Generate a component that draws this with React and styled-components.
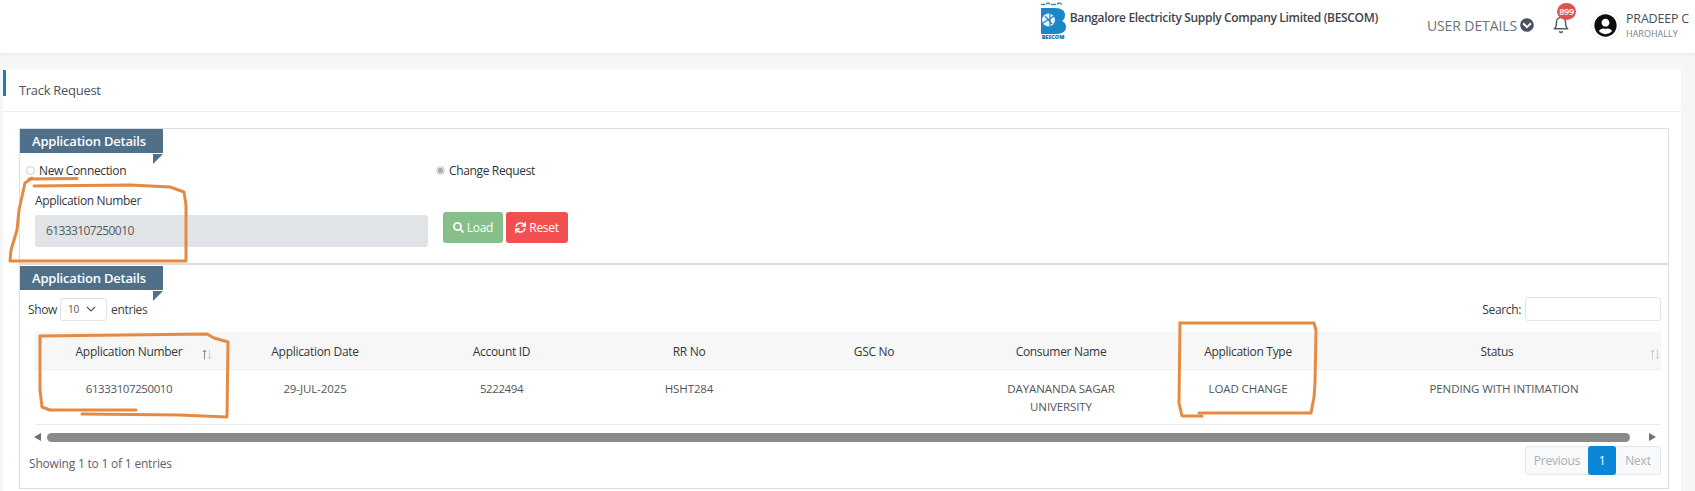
import styled, { createGlobalStyle } from "styled-components"
import { FaSearch, FaSync, FaChevronCircleDown, FaUserCircle } from "react-icons/fa"
import { FiBell } from "react-icons/fi"

const GlobalStyle = createGlobalStyle`
  html, body {
    margin: 0;
    background: #f5f6f8;
    font-family: "Open Sans", "Noto Sans", sans-serif;
    color: #3d4247;
  }
  * { box-sizing: border-box; }
`

const Page = styled.div`
  position: relative;
  width: 1695px;
  height: 491px;
  overflow: hidden;
`

const Header = styled.header`
  height: 53px;
  background: #fff;
  box-shadow: 0 1px 3px rgba(0, 0, 0, 0.08);
  display: flex;
  justify-content: flex-end;
  padding-right: 6px;
`

const Brand = styled.div`
  display: flex;
  align-items: flex-start;
  padding-top: 2px;
  margin-right: 49px;
`

const BrandName = styled.div`
  margin: 7px 0 0 3px;
  font-size: 12px;
  font-weight: 600;
  letter-spacing: -0.33px;
  line-height: 17px;
  color: #3f444a;
`

const UserDetails = styled.div`
  display: flex;
  align-items: center;
  gap: 3px;
  height: 50px;
  font-size: 14px;
  letter-spacing: -0.1px;
  color: #6c7277;
  svg { color: #4a5260; font-size: 14px; }
`

const BellWrap = styled.div`
  position: relative;
  width: 22px;
  height: 50px;
  margin: 0 17px 0 18px;
  padding-top: 15px;
  color: #555c66;
  font-size: 18px;
`

const Badge = styled.span`
  position: absolute;
  left: 5px;
  top: 3px;
  width: 19px;
  height: 17px;
  border-radius: 50%;
  background: #e2504f;
  color: #fff;
  font-size: 9px;
  font-weight: 600;
  letter-spacing: -0.3px;
  line-height: 17px;
  text-align: center;
`

const Avatar = styled.div`
  width: 29px;
  height: 29px;
  margin-top: 11px;
  border-radius: 50%;
  border: 1px solid #eee;
  display: flex;
  align-items: center;
  justify-content: center;
  font-size: 23px;
  color: #0c0c0c;
`

const UserInfo = styled.div`
  margin: 10px 0 0 6px;
`

const UserName = styled.div`
  font-size: 12.5px;
  font-weight: 500;
  line-height: 17px;
  letter-spacing: -0.2px;
  color: #4a4f55;
`

const UserPlace = styled.div`
  font-size: 9px;
  line-height: 13px;
  color: #7b8188;
`

const Card = styled.main`
  position: relative;
  margin: 16px 14px 0 3px;
  height: 422px;
  background: #fff;
  padding: 0 12px 0 16px;
  &::before {
    content: "";
    position: absolute;
    left: 0;
    top: 1px;
    width: 3px;
    height: 26px;
    background: #1f7fb0;
  }
`

const CardTitle = styled.div`
  height: 43px;
  margin: 0 -12px 16px -16px;
  padding: 11px 0 0 16px;
  border-bottom: 1px solid #eeeff1;
  font-size: 13px;
  font-weight: 500;
  letter-spacing: -0.3px;
  line-height: 20px;
  color: #4d5358;
`

const Box = styled.div`
  border: 1px solid #dcdfe2;
  height: 361px;
`

const Section = styled.section`
  height: ${(p) => p.$height}px;
  border-bottom: ${(p) => (p.$ruled ? "2px solid #dcdddf" : "none")};
  margin-bottom: ${(p) => (p.$ruled ? "1px" : "0")};
`

const Tab = styled.div`
  position: relative;
  width: 143px;
  height: 24px;
  background: #50708a;
  color: #fff;
  font-size: 13px;
  font-weight: 600;
  letter-spacing: -0.2px;
  line-height: 24px;
  padding-left: 12px;
  &::after {
    content: "";
    position: absolute;
    right: 0;
    top: 100%;
    margin-top: 1px;
    border-top: 10px solid #50708a;
    border-right: 10px solid transparent;
    width: 0;
  }
`

const RadioRow = styled.div`
  display: grid;
  grid-template-columns: 410px 1fr;
  padding: 5px 0 0 6px;
  height: 30px;
`

const RadioLabel = styled.label`
  display: flex;
  align-items: center;
  gap: 4px;
  font-size: 12px;
  font-weight: 500;
  letter-spacing: -0.35px;
  line-height: 18px;
  color: #2f3439;
`

const Radio = styled.span`
  width: 9px;
  height: 9px;
  border-radius: 50%;
  border: 1px solid #c9ccd0;
  background: ${(p) => (p.$checked ? "radial-gradient(circle, #a9adb1 0 2.5px, #eceeef 3px)" : "#fff")};
`

const FormRow = styled.div`
  display: flex;
  align-items: flex-start;
  padding: 9px 0 0 15px;
`

const Field = styled.div`
  width: 393px;
  margin-right: 15px;
`

const FieldLabel = styled.div`
  font-size: 12px;
  font-weight: 500;
  letter-spacing: -0.35px;
  line-height: 18px;
  color: #33383d;
  margin-bottom: 5px;
`

const TextBox = styled.div`
  height: 32px;
  padding-left: 11px;
  border-radius: 3px;
  background: #e1e4e6;
  font-size: 12px;
  letter-spacing: -0.6px;
  line-height: 32px;
  color: #555b61;
`

const Actions = styled.div`
  display: flex;
  gap: 3px;
  margin-top: 20px;
`

const Button = styled.button`
  height: 31px;
  width: ${(p) => p.$width}px;
  border: 0;
  border-radius: 3px;
  background: ${(p) => p.$bg};
  color: #fff;
  font: 12px "Open Sans", sans-serif;
  letter-spacing: -0.3px;
  display: flex;
  align-items: center;
  justify-content: center;
  gap: 3px;
  padding: 0;
  svg { font-size: 11px; }
`

const Toolbar = styled.div`
  display: flex;
  justify-content: space-between;
  align-items: center;
  height: 24px;
  margin: 7px 7px 11px 8px;
  font-size: 12px;
  letter-spacing: -0.35px;
`

const Show = styled.div`
  display: flex;
  align-items: center;
  gap: 4px;
  color: #3a3f44;
`

const Select = styled.div`
  width: 47px;
  height: 23px;
  margin-left: -1px;
  border: 1px solid #e0e3e6;
  border-radius: 3px;
  display: flex;
  align-items: center;
  gap: 7px;
  padding-left: 7px;
  font-size: 10px;
  color: #555;
`

const SearchWrap = styled.div`
  display: flex;
  align-items: center;
  gap: 4px;
  font-weight: 500;
  color: #33383d;
`

const SearchBox = styled.div`
  width: 136px;
  height: 24px;
  border: 1px solid #e0e3e6;
  border-radius: 3px;
`

const TableWrap = styled.div`
  margin: 0 7px 0 15px;
`

const Table = styled.table`
  width: 1626px;
  table-layout: fixed;
  border-collapse: collapse;
  font-size: 11.5px;
  letter-spacing: -0.1px;
  tbody tr { border-bottom: 1px solid #e9ebed; }
`

const Th = styled.th`
  position: relative;
  height: 37px;
  padding: 2px ${(p) => (p.$last ? 7 : 0)}px 0 0;
  background: #f7f7f7;
  border-bottom: 1px solid #eceeef;
  font-weight: 500;
  font-size: 12px;
  letter-spacing: -0.3px;
  color: #33383d;
  text-align: center;
`

const SortIcon = styled.svg`
  position: absolute;
  right: ${(p) => p.$right}px;
  top: 17px;
  fill: none;
  stroke-width: 1;
`

const Td = styled.td`
  height: 55px;
  padding: 10px ${(p) => (p.$wrap ? 30 : 0)}px 0 ${(p) => (p.$last ? 7 : p.$wrap ? 30 : 0)}px;
  color: #50565c;
  line-height: 18px;
  text-align: center;
  vertical-align: top;
  letter-spacing: ${(p) => (p.$digits ? "-0.4px" : "-0.1px")};
`

const Scroller = styled.div`
  display: flex;
  align-items: center;
  height: 9px;
  margin: 8px 0 0 -1px;
`

const Arrow = styled.span`
  width: 0;
  height: 0;
  border-top: 4px solid transparent;
  border-bottom: 4px solid transparent;
  ${(p) => (p.$right ? "border-left: 7px solid #707070; margin-left: 19px;" : "border-right: 7px solid #707070; margin-right: 6px;")}
`

const Thumb = styled.div`
  width: 1583px;
  height: 9px;
  border-radius: 5px;
  background: #8a8a8a;
`

const Footer = styled.div`
  display: flex;
  justify-content: space-between;
  height: 29px;
  margin-top: 4px;
  font-size: 12px;
  letter-spacing: -0.2px;
  color: #5b6167;
`

const Showing = styled.div`
  margin: 9px 0 0 -6px;
  line-height: 18px;
`

const Pager = styled.div`
  display: flex;
  height: 29px;
  border: 1px solid #e3e6e8;
  border-radius: 3px;
  background: #f8f9fa;
  color: #a9afb5;
`

const PageLink = styled.span`
  width: ${(p) => p.$width}px;
  margin: ${(p) => (p.$active ? "-1px 0" : "0")};
  border-radius: ${(p) => (p.$active ? "3px" : "0")};
  background: ${(p) => (p.$active ? "#0a87d8" : "transparent")};
  color: ${(p) => (p.$active ? "#fff" : "inherit")};
  line-height: ${(p) => (p.$active ? 29 : 27)}px;
  text-align: center;
`

const Marks = styled.svg`
  position: absolute;
  inset: 0;
  pointer-events: none;
  fill: none;
  stroke: #e58a42;
  stroke-width: 3;
  stroke-linecap: round;
  stroke-linejoin: round;
`

const Logo = () => (
  <svg width="27" height="38" viewBox="0 0 27 38">
    <path d="M1 2.500h4M6 2.500c1-2 3-2 4 0M11 2.500h5M17 2.500c1-2 3-2 5 0" stroke="#3a8f9a" strokeWidth="1.4" fill="none" />
    <path d="M1 6h14c7 0 10 3 10 7 0 3-1 5-3 6 2.500 1 4 3 4 6 0 4-3 7-10 7H1z" fill="#1b87c9" />
    <circle cx="8.500" cy="18" r="6.500" fill="#eaf5fa" />
    <path d="M3 21l11-7M10 11v17M5 14l7 8" stroke="#1b87c9" strokeWidth="1.200" fill="none" />
    <text x="13" y="37" fontSize="5.400" fontWeight="800" fontFamily="Open Sans" fill="#1769a5" textAnchor="middle">BESCOM</text>
  </svg>
)

const SortArrows = ({ right, up }) => (
  <SortIcon $right={right} width="10" height="11" viewBox="0 0 10 11">
    <path d="M2.500 10.500V1M0.800 3L2.500 1L4.200 3" stroke={up} />
    <path d="M7.500 0.500V10M5.800 8L7.500 10L9.200 8" stroke="#c9cccf" />
  </SortIcon>
)

const columns = [
  { title: "Application Number", value: "61333107250010", width: 188, digits: true },
  { title: "Application Date", value: "29-JUL-2025", width: 184 },
  { title: "Account ID", value: "5222494", width: 189, digits: true },
  { title: "RR No", value: "HSHT284", width: 186 },
  { title: "GSC No", value: "", width: 184 },
  { title: "Consumer Name", value: "DAYANANDA SAGAR UNIVERSITY", width: 190, wrap: true },
  { title: "Application Type", value: "LOAD CHANGE", width: 184 },
  { title: "Status", value: "PENDING WITH INTIMATION", width: 321, last: true },
]

export default function App() {
  return (
    <Page>
      <GlobalStyle />
      <Header>
        <Brand>
          <Logo />
          <BrandName>Bangalore Electricity Supply Company Limited (BESCOM)</BrandName>
        </Brand>
        <UserDetails>
          USER DETAILS <FaChevronCircleDown />
        </UserDetails>
        <BellWrap>
          <FiBell />
          <Badge>899</Badge>
        </BellWrap>
        <Avatar>
          <FaUserCircle />
        </Avatar>
        <UserInfo>
          <UserName>PRADEEP C</UserName>
          <UserPlace>HAROHALLY</UserPlace>
        </UserInfo>
      </Header>

      <Card>
        <CardTitle>Track Request</CardTitle>
        <Box>
          <Section $height={136} $ruled>
            <Tab>Application Details</Tab>
            <RadioRow>
              <RadioLabel>
                <Radio /> New Connection
              </RadioLabel>
              <RadioLabel>
                <Radio $checked /> Change Request
              </RadioLabel>
            </RadioRow>
            <FormRow>
              <Field>
                <FieldLabel>Application Number</FieldLabel>
                <TextBox>61333107250010</TextBox>
              </Field>
              <Actions>
                <Button $bg="#86bf8a" $width={60}>
                  <FaSearch /> Load
                </Button>
                <Button $bg="#f25050" $width={62}>
                  <FaSync /> Reset
                </Button>
              </Actions>
            </FormRow>
          </Section>

          <Section $height={222}>
            <Tab>Application Details</Tab>
            <Toolbar>
              <Show>
                Show
                <Select>
                  10
                  <svg width="10" height="6" viewBox="0 0 10 6" fill="none" stroke="#555" strokeWidth="1.2">
                    <path d="M1 1l4 4 4-4" />
                  </svg>
                </Select>
                entries
              </Show>
              <SearchWrap>
                Search:
                <SearchBox />
              </SearchWrap>
            </Toolbar>
            <TableWrap>
              <Table>
                <colgroup>
                  {columns.map((c) => (
                    <col key={c.title} width={c.width} />
                  ))}
                </colgroup>
                <thead>
                  <tr>
                    {columns.map((c, i) => (
                      <Th key={c.title} $last={c.last}>
                        {c.title}
                        {i === 0 && <SortArrows right={11} up="#8a8d90" />}
                        {c.last && <SortArrows right={1} up="#c9cccf" />}
                      </Th>
                    ))}
                  </tr>
                </thead>
                <tbody>
                  <tr>
                    {columns.map((c) => (
                      <Td key={c.title} $last={c.last} $wrap={c.wrap} $digits={c.digits}>
                        {c.value}
                      </Td>
                    ))}
                  </tr>
                </tbody>
              </Table>
              <Scroller>
                <Arrow />
                <Thumb />
                <Arrow $right />
              </Scroller>
              <Footer>
                <Showing>Showing 1 to 1 of 1 entries</Showing>
                <Pager>
                  <PageLink $width={62}>Previous</PageLink>
                  <PageLink $active $width={28}>1</PageLink>
                  <PageLink $width={44}>Next</PageLink>
                </Pager>
              </Footer>
            </TableWrap>
          </Section>
        </Box>
      </Card>

      <Marks width="1695" height="491" viewBox="0 0 1695 491">
        <path d="M29 179L77 178.500" />
        <path d="M34 186L130 185L170 187L184 192L186 205L186 261L10 261L11 250L17 230L19 210L25 183L32 178" />
        <path d="M40 336L207 334L214 338L228 342L227 417L180 415L82 414" />
        <path d="M136 410L50 410L42 407L40 390L40 336" />
        <path d="M1180 323L1314 323L1316 330L1315 383L1314 397L1311 413L1199 413" />
        <path d="M1180 323L1179 403L1182 416L1202 416" />
      </Marks>
    </Page>
  )
}
